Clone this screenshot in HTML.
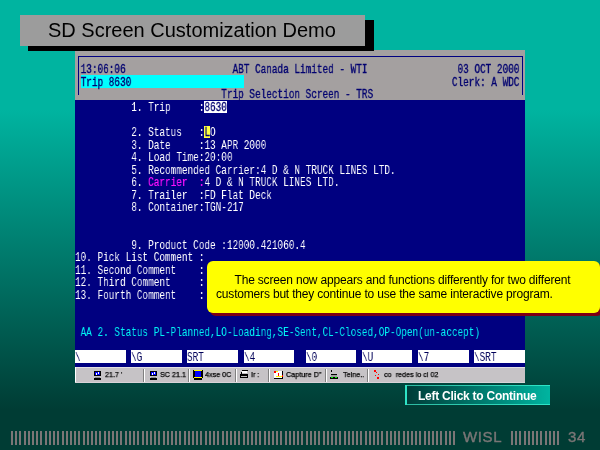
<!DOCTYPE html>
<html><head><meta charset="utf-8">
<style>
html,body{margin:0;padding:0}
body{width:600px;height:450px;position:relative;overflow:hidden;
background:linear-gradient(to bottom,#00b4a0 0px,#00b4a0 110px,#003c34 410px,#003c34 450px);
font-family:"Liberation Sans",sans-serif}
.abs{position:absolute}
#title{position:absolute;left:20px;top:15px;width:345px;height:31px;background:#9c9c9c}
#tshadow{position:absolute;left:28px;top:20px;width:346px;height:31px;background:#000}
#title span{will-change:transform;position:absolute;left:28px;top:4px;font-size:20px;line-height:23px;color:#000;white-space:pre}
#shot{position:absolute;left:75px;top:50px;width:450px;height:333px;background:#a4a0a0;overflow:hidden}
#navy{position:absolute;left:75px;top:100px;width:450px;height:267px;background:#000080}
#frame{position:absolute;left:78px;top:56px;width:443px;height:38px;border:1px solid #000080;border-bottom:none}
#cyanbar{position:absolute;left:81px;top:75px;width:163px;height:13px;background:#00ffff}
.tr{will-change:transform;position:absolute;left:75px;font-family:"Liberation Mono",monospace;font-size:13px;line-height:12.5px;white-space:pre;transform:scaleX(0.72107);transform-origin:0 0}
.hd{color:#000070;-webkit-text-stroke:.35px #000070}
.wt{color:#fff}
.cy{color:#00f4f4}
.mg{color:#ff10ff;-webkit-text-stroke:.2px #ff10ff}
.nv{color:#000070;-webkit-text-stroke:.3px #000070}
.fb{position:absolute;top:350px;height:13px;background:#fff;overflow:hidden}
.fb span{will-change:transform;position:absolute;left:0;top:1px;font-family:"Liberation Mono",monospace;font-size:13px;line-height:14px;color:#000058;white-space:pre;transform:scaleX(0.72107);transform-origin:0 0}
#task{position:absolute;left:75px;top:367px;width:450px;height:16px;background:#c6c3c6}
#callout{position:absolute;left:207px;top:261px;width:393px;height:52px;background:#ffff00;border-radius:6px;box-shadow:3px 3px 0 #7c0014}
#callout p{will-change:transform;margin:0;position:absolute;left:9px;top:11.5px;width:385px;font-size:12px;letter-spacing:-0.18px;line-height:14px;color:#000;text-indent:18.5px}
#btn{position:absolute;left:405px;top:385px;width:143px;height:18px;border:1.5px solid rgba(70,255,220,.65);border-left-width:2px;border-right:none;background:linear-gradient(to right,#003c38,#00b4a0)}
#btn span{will-change:transform;position:absolute;left:11px;top:4px;letter-spacing:-.25px;font-weight:bold;font-size:12px;line-height:13px;color:#fff;white-space:pre}
#foot{position:absolute;left:0;top:0}
.ft{will-change:transform;position:absolute;font-size:15px;line-height:16px;letter-spacing:.6px;color:#7a7676;-webkit-text-stroke:.4px #7a7676}

#task .sep{position:absolute;top:2px;width:1px;height:12px;background:#808080;border-right:1px solid #fff}
#task .tt{will-change:transform;position:absolute;top:2.5px;font-size:8px;line-height:10px;color:#000;white-space:pre;transform:scaleX(.9);transform-origin:0 0;-webkit-text-stroke:.25px #000}
#task .ic{position:absolute}

</style></head><body>
<div id="shot"></div>
<div id="tshadow"></div>
<div id="title"><span>SD Screen Customization Demo</span></div>
<div id="navy"></div>
<div id="frame"></div>
<div id="cyanbar"></div>
<div class="abs" style="left:204px;top:100.5px;width:22.5px;height:12px;background:#fff"></div>
<div class="abs" style="left:204px;top:125.5px;width:5.6px;height:12px;background:#ffff40"></div>
<div class="tr hd" style="top:63.60px"> 13:06:06                   ABT Canada Limited - WTI                03 OCT 2000</div>
<div class="tr hd" style="top:77.10px"> Trip 8630                                                         Clerk: A WDC</div>
<div class="tr hd" style="top:88.60px">                          Trip Selection Screen - TRS</div>
<div class="tr wt" style="top:102.10px">          1. Trip     :<span class="nv">8630</span></div>
<div class="tr wt" style="top:127.10px">          2. Status   :<span class="nv">L</span>O</div>
<div class="tr wt" style="top:139.60px">          3. Date     :13 APR 2000</div>
<div class="tr wt" style="top:152.10px">          4. Load Time:20:00</div>
<div class="tr wt" style="top:164.60px">          5. Recommended Carrier:4 D &amp; N TRUCK LINES LTD.</div>
<div class="tr wt" style="top:177.10px">          6. <span class="mg">Carrier</span>  <span class="mg">:</span>4 D &amp; N TRUCK LINES LTD.</div>
<div class="tr wt" style="top:189.60px">          7. Trailer  :FD Flat Deck</div>
<div class="tr wt" style="top:202.10px">          8. Container:TGN-217</div>
<div class="tr wt" style="top:239.60px">          9. Product Code :12000.421060.4</div>
<div class="tr wt" style="top:252.10px">10. Pick List Comment :</div>
<div class="tr wt" style="top:264.60px">11. Second Comment    :</div>
<div class="tr wt" style="top:277.10px">12. Third Comment     :</div>
<div class="tr wt" style="top:289.60px">13. Fourth Comment    :</div>
<div class="tr cy" style="top:327.10px"> AA 2. Status PL-Planned,LO-Loading,SE-Sent,CL-Closed,OP-Open(un-accept)</div>
<div class="fb" style="left:75px;width:51px"><span>\</span></div>
<div class="fb" style="left:131px;width:51px"><span>\G</span></div>
<div class="fb" style="left:187px;width:51px"><span>SRT</span></div>
<div class="fb" style="left:243.5px;width:50.5px"><span>\4</span></div>
<div class="fb" style="left:305.5px;width:50.5px"><span>\0</span></div>
<div class="fb" style="left:361.5px;width:50.5px"><span>\U</span></div>
<div class="fb" style="left:418px;width:51px"><span>\7</span></div>
<div class="fb" style="left:474px;width:50.5px"><span>\SRT</span></div>
<div id="task">
<div class="tt" style="left:30px">21.7 '</div>
<div class="tt" style="left:85px">SC 21.1</div>
<div class="tt" style="left:130px">4xse 0C</div>
<div class="tt" style="left:176px">Ir :</div>
<div class="tt" style="left:211px">Capture D''</div>
<div class="tt" style="left:268px">Telne..</div>
<div class="tt" style="left:309px">co  redes lo ci 02</div>
</div>
<svg class="abs" style="left:0;top:0" width="600" height="450" shape-rendering="crispEdges">
<rect x="75" y="367" width="450" height="1" fill="#e4e0e4"/>
<rect x="75" y="367" width="1" height="16" fill="#fff"/>
<rect x="75" y="382" width="450" height="1" fill="#d8d4d8"/>
<g fill="#808080"><rect x="143" y="369" width="1" height="13"/><rect x="188" y="369" width="1" height="13"/><rect x="235" y="369" width="1" height="13"/><rect x="268" y="369" width="1" height="13"/><rect x="325" y="369" width="1" height="13"/><rect x="367" y="369" width="1" height="13"/></g>
<g fill="#fff"><rect x="144" y="369" width="1" height="13"/><rect x="189" y="369" width="1" height="13"/><rect x="236" y="369" width="1" height="13"/><rect x="269" y="369" width="1" height="13"/><rect x="326" y="369" width="1" height="13"/><rect x="368" y="369" width="1" height="13"/></g>
<!-- icon1 monitor -->
<rect x="94" y="371" width="7" height="5" fill="#000"/><rect x="95" y="372" width="5" height="3" fill="#0000ff"/>
<rect x="96" y="373" width="1" height="2" fill="#fff"/><rect x="98" y="372" width="1" height="2" fill="#fff"/>
<rect x="95" y="377" width="5" height="1" fill="#909090"/><rect x="94" y="378" width="7" height="2" fill="#000"/>
<!-- icon2 monitor -->
<rect x="150" y="371" width="7" height="5" fill="#000"/><rect x="151" y="372" width="5" height="3" fill="#0000ff"/>
<rect x="152" y="373" width="1" height="2" fill="#fff"/><rect x="154" y="372" width="1" height="2" fill="#fff"/>
<rect x="151" y="377" width="5" height="1" fill="#909090"/><rect x="150" y="378" width="7" height="2" fill="#000"/>
<!-- icon3 -->
<rect x="193" y="370" width="10" height="8" fill="#000"/><rect x="194" y="370" width="8" height="1" fill="#ffff00"/><rect x="194" y="377" width="8" height="1" fill="#ffff00"/>
<rect x="195" y="371" width="6" height="6" fill="#0000ff"/><rect x="194" y="378" width="8" height="2" fill="#000"/>
<!-- icon4 printer -->
<rect x="242" y="370" width="6" height="1" fill="#000"/><rect x="242" y="371" width="5" height="2" fill="#fff"/><rect x="241" y="372" width="1" height="2" fill="#000"/>
<rect x="240" y="374" width="8" height="4" fill="#000"/><rect x="241" y="376" width="6" height="1" fill="#c0c0c0"/>
<!-- icon5 capture -->
<rect x="274" y="371" width="9" height="8" fill="#000"/><rect x="274" y="371" width="8" height="7" fill="#fff"/>
<rect x="274" y="371" width="2" height="2" fill="#ff0000"/><rect x="276" y="371" width="2" height="1" fill="#ffff00"/><rect x="278" y="373" width="1" height="3" fill="#ff0000"/><rect x="276" y="376" width="6" height="1" fill="#ffff00"/><rect x="282" y="375" width="1" height="2" fill="#ff0000"/>
<!-- icon6 telnet -->
<rect x="331" y="370" width="1" height="2" fill="#000"/><rect x="331" y="374" width="6" height="1" fill="#000"/><rect x="331" y="375" width="6" height="2" fill="#a0a0a0"/>
<rect x="330" y="377" width="8" height="2" fill="#000"/><rect x="331" y="377" width="2" height="1" fill="#00ff00"/><rect x="335" y="377" width="2" height="1" fill="#00ff00"/>
<!-- icon7 red dots -->
<g fill="#ff0000"><rect x="374" y="370" width="2" height="2"/><rect x="376" y="372" width="1" height="1"/><rect x="375" y="375" width="1" height="1"/><rect x="378" y="374" width="1" height="1"/><rect x="377" y="377" width="2" height="2"/></g>
</svg>
<div id="callout"><p>The screen now appears and functions differently for two different customers but they continue to use the same interactive program.</p></div>
<div id="btn"><span>Left Click to Continue</span></div>
<svg id="foot" width="600" height="450" fill="#7a7676"><rect x="11" y="431" width="2" height="14"/><rect x="15" y="431" width="2" height="14"/><rect x="19" y="431" width="2" height="14"/><rect x="24" y="431" width="2" height="14"/><rect x="28" y="431" width="2" height="14"/><rect x="32" y="431" width="2" height="14"/><rect x="36" y="431" width="2" height="14"/><rect x="40" y="431" width="2" height="14"/><rect x="45" y="431" width="2" height="14"/><rect x="49" y="431" width="2" height="14"/><rect x="53" y="431" width="2" height="14"/><rect x="57" y="431" width="2" height="14"/><rect x="62" y="431" width="2" height="14"/><rect x="66" y="431" width="2" height="14"/><rect x="70" y="431" width="2" height="14"/><rect x="74" y="431" width="2" height="14"/><rect x="78" y="431" width="2" height="14"/><rect x="83" y="431" width="2" height="14"/><rect x="87" y="431" width="2" height="14"/><rect x="91" y="431" width="2" height="14"/><rect x="95" y="431" width="2" height="14"/><rect x="99" y="431" width="2" height="14"/><rect x="104" y="431" width="2" height="14"/><rect x="108" y="431" width="2" height="14"/><rect x="112" y="431" width="2" height="14"/><rect x="116" y="431" width="2" height="14"/><rect x="120" y="431" width="2" height="14"/><rect x="125" y="431" width="2" height="14"/><rect x="129" y="431" width="2" height="14"/><rect x="133" y="431" width="2" height="14"/><rect x="137" y="431" width="2" height="14"/><rect x="142" y="431" width="2" height="14"/><rect x="146" y="431" width="2" height="14"/><rect x="150" y="431" width="2" height="14"/><rect x="154" y="431" width="2" height="14"/><rect x="158" y="431" width="2" height="14"/><rect x="163" y="431" width="2" height="14"/><rect x="167" y="431" width="2" height="14"/><rect x="171" y="431" width="2" height="14"/><rect x="175" y="431" width="2" height="14"/><rect x="179" y="431" width="2" height="14"/><rect x="184" y="431" width="2" height="14"/><rect x="188" y="431" width="2" height="14"/><rect x="192" y="431" width="2" height="14"/><rect x="196" y="431" width="2" height="14"/><rect x="200" y="431" width="2" height="14"/><rect x="205" y="431" width="2" height="14"/><rect x="209" y="431" width="2" height="14"/><rect x="213" y="431" width="2" height="14"/><rect x="217" y="431" width="2" height="14"/><rect x="222" y="431" width="2" height="14"/><rect x="226" y="431" width="2" height="14"/><rect x="230" y="431" width="2" height="14"/><rect x="234" y="431" width="2" height="14"/><rect x="238" y="431" width="2" height="14"/><rect x="243" y="431" width="2" height="14"/><rect x="247" y="431" width="2" height="14"/><rect x="251" y="431" width="2" height="14"/><rect x="255" y="431" width="2" height="14"/><rect x="259" y="431" width="2" height="14"/><rect x="264" y="431" width="2" height="14"/><rect x="268" y="431" width="2" height="14"/><rect x="272" y="431" width="2" height="14"/><rect x="276" y="431" width="2" height="14"/><rect x="280" y="431" width="2" height="14"/><rect x="285" y="431" width="2" height="14"/><rect x="289" y="431" width="2" height="14"/><rect x="293" y="431" width="2" height="14"/><rect x="297" y="431" width="2" height="14"/><rect x="301" y="431" width="2" height="14"/><rect x="306" y="431" width="2" height="14"/><rect x="310" y="431" width="2" height="14"/><rect x="314" y="431" width="2" height="14"/><rect x="318" y="431" width="2" height="14"/><rect x="323" y="431" width="2" height="14"/><rect x="327" y="431" width="2" height="14"/><rect x="331" y="431" width="2" height="14"/><rect x="335" y="431" width="2" height="14"/><rect x="339" y="431" width="2" height="14"/><rect x="344" y="431" width="2" height="14"/><rect x="348" y="431" width="2" height="14"/><rect x="352" y="431" width="2" height="14"/><rect x="356" y="431" width="2" height="14"/><rect x="360" y="431" width="2" height="14"/><rect x="365" y="431" width="2" height="14"/><rect x="369" y="431" width="2" height="14"/><rect x="373" y="431" width="2" height="14"/><rect x="377" y="431" width="2" height="14"/><rect x="381" y="431" width="2" height="14"/><rect x="386" y="431" width="2" height="14"/><rect x="390" y="431" width="2" height="14"/><rect x="394" y="431" width="2" height="14"/><rect x="398" y="431" width="2" height="14"/><rect x="403" y="431" width="2" height="14"/><rect x="407" y="431" width="2" height="14"/><rect x="411" y="431" width="2" height="14"/><rect x="415" y="431" width="2" height="14"/><rect x="419" y="431" width="2" height="14"/><rect x="424" y="431" width="2" height="14"/><rect x="428" y="431" width="2" height="14"/><rect x="432" y="431" width="2" height="14"/><rect x="436" y="431" width="2" height="14"/><rect x="440" y="431" width="2" height="14"/><rect x="445" y="431" width="2" height="14"/><rect x="449" y="431" width="2" height="14"/><rect x="453" y="431" width="2" height="14"/><rect x="511" y="431" width="2" height="14"/><rect x="515" y="431" width="2" height="14"/><rect x="519" y="431" width="2" height="14"/><rect x="524" y="431" width="2" height="14"/><rect x="528" y="431" width="2" height="14"/><rect x="532" y="431" width="2" height="14"/><rect x="536" y="431" width="2" height="14"/><rect x="540" y="431" width="2" height="14"/><rect x="545" y="431" width="2" height="14"/><rect x="549" y="431" width="2" height="14"/><rect x="553" y="431" width="2" height="14"/><rect x="557" y="431" width="2" height="14"/></svg>
<div class="ft" style="left:463px;top:428.5px">WISL</div>
<div class="ft" style="left:568px;top:428.5px">34</div>

</body></html>
